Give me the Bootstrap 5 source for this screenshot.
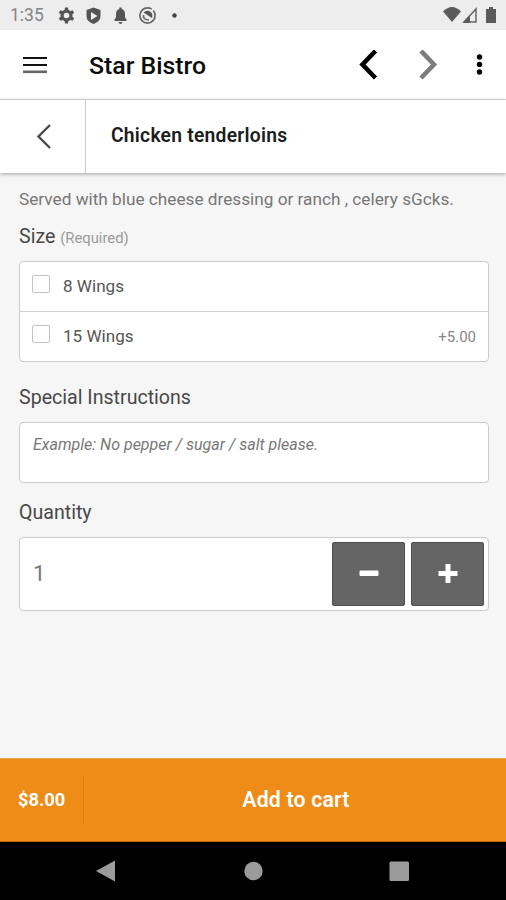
<!DOCTYPE html>
<html lang="en">
<head>
<meta charset="utf-8">
<meta name="viewport" content="width=device-width, initial-scale=1">
<title>Star Bistro</title>
<link href="https://cdn.jsdelivr.net/npm/bootstrap@5.3.0/dist/css/bootstrap.min.css" rel="stylesheet">
<style>
body{font-family:Roboto,"Liberation Sans",sans-serif;background:#f6f6f6;color:#444;height:900px;overflow:hidden;line-height:1.2}
svg{display:block;flex:none}
.status-bar{height:30px;background:#ededed;color:#858585;font-size:17.5px;padding:1px 8px 0 10px}
.app-bar{height:70px;border-bottom:1px solid #dcdcdc;padding:0 20px 0 23px}
.app-title{font-size:24.8px;font-weight:500;color:#0c0c0c;margin-left:42px;padding-top:2px}
.item-bar{height:73px;box-shadow:0 1px 4px rgba(0,0,0,.35)}
.back-cell{width:86px;border-right:1px solid #ccc}
.item-title{font-size:19.3px;font-weight:600;color:#1c1c1c;padding:0 0 2px 25px;letter-spacing:.24px}
.content{padding:0 17px 0 19px}
.desc{font-size:17.22px;color:#777;line-height:22px;margin-top:15px}
.field-label{font-size:19.6px;line-height:24px;color:#484848}
.size-label{margin:15px 0 11px}
.note-label{margin:24px 0 12px}
.qty-label{margin:18px 0 12px}
.required{font-size:14.8px;color:#999}
.panel{background:#fff;border:1px solid #cbcbcb;border-radius:4px}
.option{height:49px;padding:0 12px 0 12px;font-size:17.1px;color:#555}
.option+.option{border-top:1px solid #d2d2d2;height:50px}
.option .form-check-input{width:18px;height:18px;border:1px solid #c2c2c2;border-radius:2px;margin:-6px 13px 0 0;flex:none}
.price{font-size:15px;color:#888}
.note{height:61px;padding:12px 13px;font-size:16px;line-height:20px;resize:none;box-shadow:none;border-radius:4px}
.note::placeholder{color:#777;font-style:italic}
.qty{height:74px;padding:0 4px 0 13px;font-size:22px;color:#777}
.qty .btn{width:73px;height:64px;background:#656565;border:1px solid #4e4e4e;border-radius:2px;padding:0}
.qty .btn+.btn{margin-left:6px}
.cart{height:84px;background:#ef8c18;border-top:1px solid #f0a653;border-bottom:1px solid #b86b12;color:#fff}
.total{width:84px;height:50px;border-right:1px solid #df8013;padding-left:18px;font-size:18.3px;font-weight:700}
.add{font-size:21.2px;font-weight:600;letter-spacing:.2px;padding-left:2px}
.system-nav{height:58px;background:#000}
</style>
</head>
<body class="d-flex flex-column">
<div class="status-bar d-flex align-items-center">
  <span>1:35</span>
  <svg class="ms-auto order-last" width="56" height="20" viewBox="0 0 56 20"><path d="M1 5.500Q10-3.500 19 5.500L10 16Z" fill="#5b5b5b"/><path d="M22 16 34 3v13Z" fill="none" stroke="#666" stroke-width="1.500"/><path d="M21 17 28 9v8Z" fill="#5b5b5b"/><path d="M44 3h3V1h4v2h3v14H44Z" fill="#5b5b5b"/></svg>
  <svg width="130" height="20" viewBox="0 0 130 20" class="ms-2"><g fill="#555"><g transform="translate(14.500 9.500)"><circle r="4.400" fill="none" stroke="#555" stroke-width="3.200"/><path d="M-2-5-1.500-8h3L2-5Z"/><path d="M-2-5-1.500-8h3L2-5Z" transform="rotate(60)"/><path d="M-2-5-1.500-8h3L2-5Z" transform="rotate(120)"/><path d="M-2-5-1.500-8h3L2-5Z" transform="rotate(180)"/><path d="M-2-5-1.500-8h3L2-5Z" transform="rotate(240)"/><path d="M-2-5-1.500-8h3L2-5Z" transform="rotate(300)"/></g><path d="M41.500 1.500 48.500 4v6q0 5.500-7 8-7-2.500-7-8V4Z"/><path d="M39 6v8l6.500-4Z" fill="#eee"/><path d="M62.500 15v-1.500l1.500-2V8q0-4 3.300-5V1.500h2.400V3Q73 4 73 8v3.500l1.500 2V15ZM66.500 16h4q-.5 2-2 2t-2-2"/></g><circle cx="95.500" cy="9.500" r="7.600" fill="none" stroke="#666" stroke-width="1.700" stroke-dasharray="40 2"/><path d="M91.500 6.500q3-3 6.500-1t2 6.500Z" fill="#555"/><path d="M91.500 9q-.5 5 5.500 5" fill="none" stroke="#666" stroke-width="1.600"/><circle cx="122.500" cy="9.500" r="2.200" fill="#444"/></svg>
</div>
<nav class="app-bar bg-white d-flex align-items-center">
  <svg width="24" height="18" viewBox="0 0 24 18"><path d="M0 2h24M0 9h24" stroke="#111" stroke-width="2.200"/><path d="M0 15.800h24" stroke="#666" stroke-width="2.600"/></svg>
  <span class="app-title">Star Bistro</span>
  <svg class="ms-auto" width="130" height="30" viewBox="0 0 130 30"><path d="M19.500 1 6.500 14.500l13 13.500" fill="none" stroke="#000" stroke-width="4.600"/><path d="M65 1 78 14.500l-13 13.500" fill="none" stroke="#7c7c7c" stroke-width="4.600"/><g fill="#000"><circle cx="123.500" cy="7" r="2.700"/><circle cx="123.500" cy="14.500" r="2.700"/><circle cx="123.500" cy="22" r="2.700"/></g></svg>
</nav>
<header class="item-bar bg-white d-flex align-items-center">
  <div class="back-cell h-100 d-flex align-items-center justify-content-center"><svg width="16" height="26" viewBox="0 0 16 26"><path d="M15 1 3.500 12.500 15 24" fill="none" stroke="#4a4a4a" stroke-width="2.400"/></svg></div>
  <h1 class="item-title m-0">Chicken tenderloins</h1>
</header>
<main class="content flex-grow-1">
  <p class="desc mb-0 text-nowrap">Served with blue cheese dressing or ranch , celery sGcks.</p>
  <div class="field-label size-label">Size <span class="required">(Required)</span></div>
  <div class="panel">
    <label class="option d-flex align-items-center"><input class="form-check-input" type="checkbox"><span>8 Wings</span></label>
    <label class="option d-flex align-items-center"><input class="form-check-input" type="checkbox"><span>15 Wings</span><span class="price ms-auto">+5.00</span></label>
  </div>
  <div class="field-label note-label">Special Instructions</div>
  <textarea class="note panel form-control" placeholder="Example: No pepper / sugar / salt please."></textarea>
  <div class="field-label qty-label">Quantity</div>
  <div class="qty panel d-flex align-items-center">
    <span class="me-auto">1</span>
    <button class="btn d-flex align-items-center justify-content-center" type="button" aria-label="Decrease"><svg width="20" height="20"><rect x=".5" y="6.500" width="19" height="5.500" rx="1" fill="#fff"/></svg></button>
    <button class="btn d-flex align-items-center justify-content-center" type="button" aria-label="Increase"><svg width="20" height="20"><path d="M.5 9.500h19M10 0v19" stroke="#fff" stroke-width="5"/></svg></button>
  </div>
</main>
<div class="cart d-flex align-items-center">
  <div class="total d-flex align-items-center">$8.00</div>
  <div class="add flex-grow-1 text-center">Add to cart</div>
</div>
<div class="system-nav d-flex align-items-center">
  <svg width="506" height="24" viewBox="0 0 506 24"><g fill="#9b9b9b"><path d="M96 12 115 1.500v21Z"/><circle cx="253.500" cy="12" r="9.200"/><rect x="389.500" y="2.500" width="19.500" height="19.500" rx="1.500"/></g></svg>
</div>
<script src="https://cdn.jsdelivr.net/npm/bootstrap@5.3.0/dist/js/bootstrap.bundle.min.js"></script>
</body>
</html>
